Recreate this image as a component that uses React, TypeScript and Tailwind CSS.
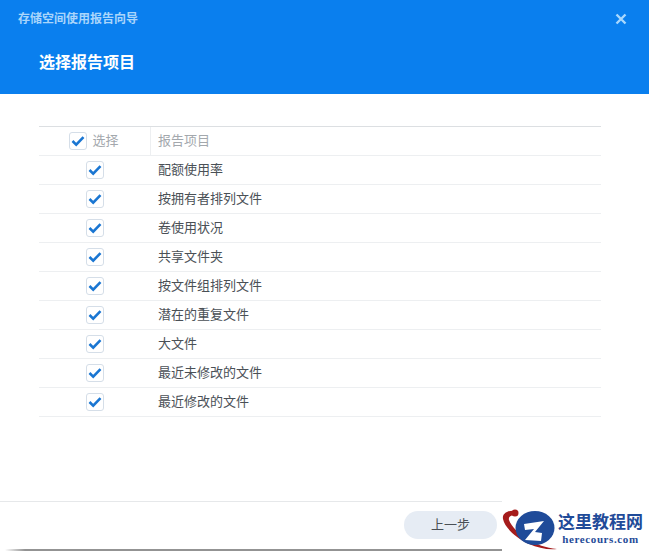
// App.tsx
// Storage report wizard: choose report items step.

const ITEMS = [
  "配额使用率",
  "按拥有者排列文件",
  "卷使用状况",
  "共享文件夹",
  "按文件组排列文件",
  "潜在的重复文件",
  "大文件",
  "最近未修改的文件",
  "最近修改的文件",
];

const FONT = "font-['Liberation_Sans','Noto_Sans_CJK_SC',sans-serif]";

function CheckBox() {
  return (
    <span className="flex h-[18px] w-[18px] shrink-0 items-center justify-center rounded-[3px] border border-[#d5dee8] bg-white">
      <svg width="14" height="12" viewBox="0 0 14 12" fill="none">
        <path d="M1.5 6 L5.2 9.6 L12.5 2.2" stroke="#1a76d2" strokeWidth="2.6" />
      </svg>
    </span>
  );
}

function Watermark() {
  return (
    <div className="absolute bottom-0 left-[502px] flex h-[50px] w-[147px] items-center bg-white">
      <svg width="56" height="50" viewBox="0 0 56 50" className="shrink-0">
        <path d="M13 10 C5 9 0 13 1 18 C3 27 14 37 27 43 C36 47 46 49 55 48 C44 47 34 43 26 39 C18 34 9 25 7 19 C6 16 9 14 14 14 Z" fill="#a51c1c" />
        <circle cx="13" cy="12" r="3.5" fill="#a51c1c" />
        <ellipse cx="33" cy="27" rx="19.5" ry="17" fill="#1f4b99" />
        <path d="M22 23 L42 20 L33 31 L40 32 L39 40 L23 39 L32 28 L23 29 Z" fill="#fff" />
      </svg>
      <div className="flex flex-col items-center gap-[2px] pt-[4px]">
        <span className="font-['Noto_Sans_CJK_SC',serif] text-[17px] leading-[21px] font-bold text-[#1f4b99]">
          这里教程网
        </span>
        <span className="font-['Liberation_Serif',serif] text-[11px] leading-[13px] font-bold tracking-[0.6px] text-[#1f4b99]">
          herecours.com
        </span>
      </div>
    </div>
  );
}

export default function App() {
  return (
    <div className={`relative flex h-[551px] w-[649px] flex-col overflow-hidden bg-white ${FONT}`}>
      {/* Header */}
      <div className="h-[94px] shrink-0 bg-[#0a7fee]">
        <div className="flex h-[38px] items-center justify-between pr-[22px] pl-[18px]">
          <span className="text-[12px] font-bold text-[#a9d5fb]">存储空间使用报告向导</span>
          <svg width="12" height="12" viewBox="0 0 12 12" fill="none">
            <path d="M1.5 1.5 L10.5 10.5 M10.5 1.5 L1.5 10.5" stroke="#a9d8fd" strokeWidth="2.4" />
          </svg>
        </div>
        <div className="pt-[13px] pl-[39px] text-[16px] leading-[24px] font-bold text-white">选择报告项目</div>
      </div>

      {/* Table */}
      <div className="flex-1 px-[48px] pt-[32px] pl-[39px]">
        <div className="border-t border-[#dcdfe2]">
          <div className="flex h-[29px] items-center border-b border-[#edeff1] text-[13px] text-[#a3a8ad]">
            <div className="flex h-full w-[112px] items-center justify-center gap-[5px] border-r border-[#edeff1] pr-[1px]">
              <CheckBox />
              <span>选择</span>
            </div>
            <span className="pl-[7px]">报告项目</span>
          </div>
          {ITEMS.map((item) => (
            <div key={item} className="flex h-[29px] items-center border-b border-[#edeff1] text-[13px] text-[#4a5056]">
              <div className="flex w-[112px] justify-center pr-[1px]">
                <CheckBox />
              </div>
              <span className="pl-[7px]">{item}</span>
            </div>
          ))}
        </div>
      </div>

      {/* Footer */}
      <div className="flex h-[50px] shrink-0 items-start border-t border-[#e6e8ea] pt-[9px] pl-[404px]">
        <button type="button" className="h-[28px] w-[93px] rounded-full bg-[#e6ecf4] text-[13px] text-[#4a5056]">
          上一步
        </button>
      </div>
      <div className="absolute bottom-0 left-0 h-[2px] w-[503px] bg-linear-to-r from-white from-[1%] to-[#939393] to-[5%]" />
      <Watermark />
    </div>
  );
}
